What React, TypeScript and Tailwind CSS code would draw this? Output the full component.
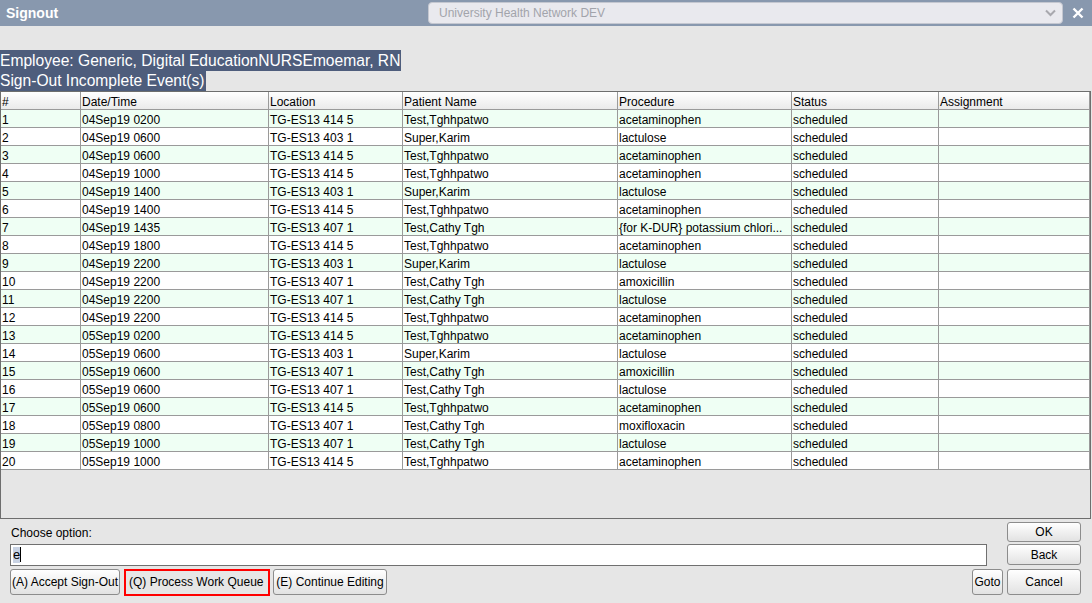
import React from "react";

const rows: string[][] = [
  ["1", "04Sep19 0200", "TG-ES13 414 5", "Test,Tghhpatwo", "acetaminophen"],
  ["2", "04Sep19 0600", "TG-ES13 403 1", "Super,Karim", "lactulose"],
  ["3", "04Sep19 0600", "TG-ES13 414 5", "Test,Tghhpatwo", "acetaminophen"],
  ["4", "04Sep19 1000", "TG-ES13 414 5", "Test,Tghhpatwo", "acetaminophen"],
  ["5", "04Sep19 1400", "TG-ES13 403 1", "Super,Karim", "lactulose"],
  ["6", "04Sep19 1400", "TG-ES13 414 5", "Test,Tghhpatwo", "acetaminophen"],
  ["7", "04Sep19 1435", "TG-ES13 407 1", "Test,Cathy Tgh", "{for K-DUR} potassium chlori..."],
  ["8", "04Sep19 1800", "TG-ES13 414 5", "Test,Tghhpatwo", "acetaminophen"],
  ["9", "04Sep19 2200", "TG-ES13 403 1", "Super,Karim", "lactulose"],
  ["10", "04Sep19 2200", "TG-ES13 407 1", "Test,Cathy Tgh", "amoxicillin"],
  ["11", "04Sep19 2200", "TG-ES13 407 1", "Test,Cathy Tgh", "lactulose"],
  ["12", "04Sep19 2200", "TG-ES13 414 5", "Test,Tghhpatwo", "acetaminophen"],
  ["13", "05Sep19 0200", "TG-ES13 414 5", "Test,Tghhpatwo", "acetaminophen"],
  ["14", "05Sep19 0600", "TG-ES13 403 1", "Super,Karim", "lactulose"],
  ["15", "05Sep19 0600", "TG-ES13 407 1", "Test,Cathy Tgh", "amoxicillin"],
  ["16", "05Sep19 0600", "TG-ES13 407 1", "Test,Cathy Tgh", "lactulose"],
  ["17", "05Sep19 0600", "TG-ES13 414 5", "Test,Tghhpatwo", "acetaminophen"],
  ["18", "05Sep19 0800", "TG-ES13 407 1", "Test,Cathy Tgh", "moxifloxacin"],
  ["19", "05Sep19 1000", "TG-ES13 407 1", "Test,Cathy Tgh", "lactulose"],
  ["20", "05Sep19 1000", "TG-ES13 414 5", "Test,Tghhpatwo", "acetaminophen"],
];

const headers = ["#", "Date/Time", "Location", "Patient Name", "Procedure", "Status", "Assignment"];
const gridCols = "grid grid-cols-[80px_188px_134px_215px_174px_147px_1fr]";
const cellCls =
  "border-r border-b border-[#9a9a9a] text-[12px] leading-[14px] pt-[3px] pl-[1px] whitespace-nowrap overflow-hidden";

function Btn({ children, className = "" }: { children: React.ReactNode; className?: string }) {
  return (
    <button
      className={
        "flex items-center justify-center rounded-[3px] border border-[#8c8c8c] bg-gradient-to-b from-[#ffffff] to-[#e2e2e2] text-[12px] text-black leading-none whitespace-nowrap " +
        className
      }
    >
      {children}
    </button>
  );
}

export default function App() {
  return (
    <div className="w-[1092px] h-[603px] bg-[#e6e6e6] overflow-hidden font-['Liberation_Sans',Arial,sans-serif] text-black">
      {/* Title bar */}
      <div className="h-[26px] bg-[#8898ae] flex items-center">
        <div className="pl-[6px] w-[428px] text-white font-bold text-[14px]">Signout</div>
        <div className="w-[635px] h-[22px] rounded-[4px] border border-[#c4c7d0] bg-[#e9e9ee] flex items-center pl-[10px] pr-[6px]">
          <span className="flex-1 text-[12px] text-[#a2a4ab]">University Health Network DEV</span>
          <svg width="11" height="8" viewBox="0 0 11 8">
            <path d="M1 1.5 L5.5 6 L10 1.5" stroke="#a8a8ae" strokeWidth="2" fill="none" />
          </svg>
        </div>
        <div className="flex-1 flex items-center justify-center">
          <svg width="12" height="12" viewBox="0 0 12 12">
            <path d="M1.5 1.5 L10.5 10.5 M10.5 1.5 L1.5 10.5" stroke="#ffffff" strokeWidth="2.4" />
          </svg>
        </div>
      </div>

      {/* Heading lines */}
      <div className="pt-[24px]">
        <div className="w-fit bg-[#4e5d7c] text-white text-[15.6px] leading-[21px] pr-[1px]">
          Employee: Generic, Digital EducationNURSEmoemar, RN
        </div>
        <div className="w-fit bg-[#4e5d7c] text-white text-[15.6px] leading-[20px] pr-[1px]">
          Sign-Out Incomplete Event(s)
        </div>
      </div>

      {/* Table */}
      <div className="mr-[1px] h-[428px] border border-[#6e6e6e] bg-[#e6e6e6] overflow-hidden">
        <div className={gridCols + " h-[18px] bg-gradient-to-b from-[#ffffff] to-[#e9e9e9]"}>
          {headers.map((h, i) => (
            <div key={i} className={cellCls}>
              {h}
            </div>
          ))}
        </div>
        {rows.map((r, idx) => (
          <div
            key={idx}
            className={gridCols + " h-[18px] " + (idx % 2 === 0 ? "bg-[#effff4]" : "bg-white")}
          >
            {[...r, "scheduled", ""].map((c, i) => (
              <div key={i} className={cellCls}>
                {c}
              </div>
            ))}
          </div>
        ))}
      </div>

      {/* Bottom area */}
      <div className="pt-[3px]">
        <div className="flex items-center h-[20px]">
          <div className="pl-[11px] w-[1007px] text-[12px] pt-[2px]">Choose option:</div>
          <Btn className="w-[74px] h-[20px]">OK</Btn>
        </div>
        <div className="flex items-center h-[23px] mt-[1px]">
          <div className="ml-[10px] w-[977px] h-[22px] bg-white border border-[#707070] flex items-center pl-[2px]">
            <span className="bg-[#c9d3e4] text-[13px] leading-[16px]">e</span>
            <span className="w-[1px] h-[15px] bg-black"></span>
          </div>
          <div className="w-[20px]"></div>
          <Btn className="w-[74px] h-[21px]">Back</Btn>
        </div>
        <div className="flex items-center h-[26px] mt-[3px]">
          <div className="w-[10px]"></div>
          <Btn className="w-[110px] h-[26px] px-[2px]">(A) Accept Sign-Out</Btn>
          <div className="w-[4px]"></div>
          <div className="border-2 border-[#ff0000] h-[27px] w-[146px] flex items-center">
            <span className="text-[12px] pl-[3px] whitespace-nowrap">(Q) Process Work Queue</span>
          </div>
          <div className="w-[3px]"></div>
          <Btn className="w-[114px] h-[26px]">(E) Continue Editing</Btn>
          <div className="w-[585px]"></div>
          <Btn className="w-[31px] h-[26px]">Goto</Btn>
          <div className="w-[4px]"></div>
          <Btn className="w-[74px] h-[26px]">Cancel</Btn>
        </div>
      </div>
    </div>
  );
}
